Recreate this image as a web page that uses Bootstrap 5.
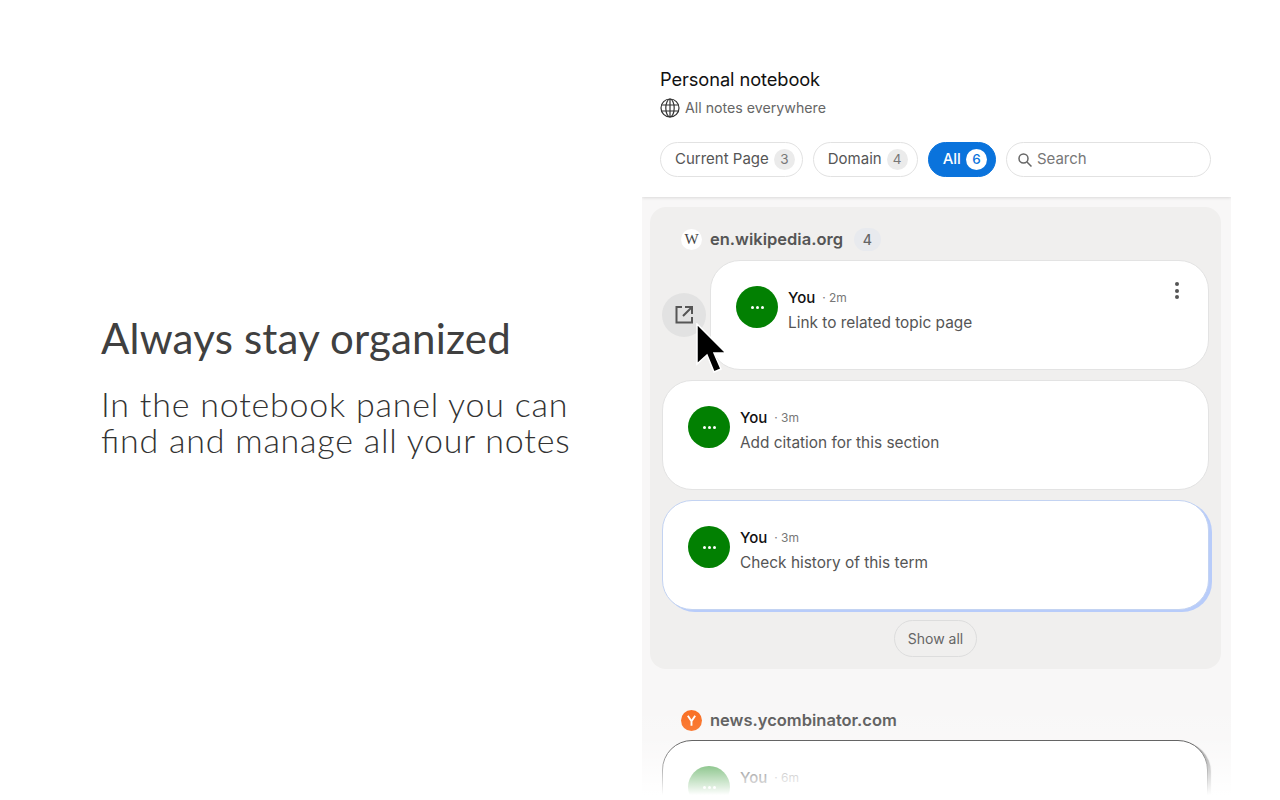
<!DOCTYPE html>
<html lang="en">
<head>
<meta charset="utf-8">
<title>Personal notebook</title>
<link href="https://cdn.jsdelivr.net/npm/bootstrap@5.3.0/dist/css/bootstrap.min.css" rel="stylesheet">
<style>
html,body{height:800px;overflow:hidden;background:#fff}
body{font-family:Inter,"Liberation Sans",sans-serif;color:#111}
.stage{height:800px}
.pitch{width:642px;padding-left:101px;padding-top:313px;font-family:Lato,"Noto Sans",sans-serif;color:#333}
.pitch h1{font-size:42px;line-height:50px;font-weight:400;letter-spacing:.2px;margin:0 0 23px;color:#404040;font-feature-settings:"liga" 1}
.pitch p{font-size:34px;line-height:36px;font-weight:300;letter-spacing:.77px;margin:0;color:#333;font-feature-settings:"liga" 1}
.panel{width:589px;margin-top:42px;height:755px;background:#f8f7f7;position:relative;overflow:hidden}
.panel-top{height:155px;background:#fff;padding:25px 18px 0;box-shadow:0 1px 3px rgba(0,0,0,.12);position:relative}
.panel-title{font-size:18.3px;line-height:24px;font-weight:400;color:#111;letter-spacing:-.1px}
.panel-sub{font-size:14.2px;line-height:20px;color:#666;margin-top:7px;gap:5px}
.chips{margin-top:24px;gap:10px}
.chip{height:35px;border:1px solid #e2e2e2;border-radius:18px;display:flex;align-items:center;font-size:15px;color:#555;padding:0 7px 0 14px;background:#fff;gap:5px;white-space:nowrap}
.chip:nth-child(2){padding-right:9px}
.chip:nth-child(3){padding-right:8px}
.chip i{font-style:normal;width:21px;height:21px;border-radius:50%;background:#ebebeb;color:#777;font-size:13.5px;display:flex;align-items:center;justify-content:center}
.chip-on{background:#0a73dc;border-color:#0a73dc;color:#fff;font-weight:500}
.chip-on i{background:#fff;color:#0a73dc}
.seek{width:205px;height:35px;border:1px solid #e2e2e2;border-radius:18px;padding:0 10px;font-size:15px;color:#777;gap:4px}
.bunch{margin:10px 10px 0 8px;background:#f0efee;border-radius:16px;height:462px;padding:20px 12px 0}
.site{height:25px;font-size:16.5px;font-weight:600;color:#555;padding-left:19px;gap:8px}
.site-w{width:21px;height:21px;border-radius:50%;background:#fff;font-family:"Liberation Serif",serif;font-size:15px;font-weight:400;color:#444;display:flex;align-items:center;justify-content:center}
.site-n{font-weight:500;font-size:14px;color:#666;background:#e8eaee;width:27px;height:23px;border-radius:12px;margin-left:3px;display:flex;align-items:center;justify-content:center}
.note{height:110px;background:#fff;border:1px solid #e3e3e3;border-radius:30px;padding:25px;gap:10px;position:relative}
.note + .note{margin-top:10px}
.slid{margin-left:48px}
.focused{border-color:#c3d3f2;box-shadow:3px 2px 0 #b8ccfa}
.who{width:42px;height:42px;border-radius:50%;background:#028002;color:#fff;flex:none;display:flex;align-items:center;justify-content:center;gap:2px}
.who b{width:3px;height:3px;border-radius:50%;background:#fff;display:block}
.name{font-size:15px;line-height:20px;font-weight:500;color:#111;margin-top:2px}
.when{font-size:12px;color:#777;font-weight:400;margin-left:3px;position:relative;top:-1px}
.text{font-size:15.4px;line-height:20px;color:#555;margin-top:4px}
.kebab{position:absolute;right:29px;top:21px;display:flex;flex-direction:column;gap:2.5px}
.kebab b{width:4px;height:4px;border-radius:50%;background:#555;display:block}
.ext{position:absolute;left:662px;top:293px;width:44px;height:44px;border-radius:50%;background:#e2e2e2;display:flex;align-items:center;justify-content:center}
.more-wrap{margin-top:10px}
.showall{height:37px;width:83px;border:1px solid #ddd;border-radius:19px;font-size:14px;color:#666;display:flex;align-items:center;justify-content:center}
.bunch2{padding:39px 23px 0 20px}
.bunch2 .site{height:24px}
.last{border-color:#444;box-shadow:3px 2px 1px #888}
.fadeout{position:absolute;left:0;right:0;bottom:0;height:97px;background:linear-gradient(rgba(255,255,255,0),rgba(255,255,255,.15) 40%,#fff 98%);z-index:3}
.cursor{position:absolute;left:696px;top:323px;z-index:5}
</style>
</head>
<body>
<div class="stage d-flex position-relative">
  <div class="pitch flex-shrink-0">
    <h1>Always stay organized</h1>
    <p>In the notebook panel you can<br>find and manage all your notes</p>
  </div>
  <div class="panel flex-shrink-0">
    <div class="panel-top">
      <div class="panel-title">Personal notebook</div>
      <div class="panel-sub d-flex align-items-center">
        <svg width="20" height="20" viewBox="0 0 20 20" fill="none" stroke="#333" stroke-width="1.2"><circle cx="10" cy="10" r="9"/><ellipse cx="10" cy="10" rx="4.2" ry="9"/><path d="M10 1v18M1.2 7h17.6M1.2 13h17.6"/></svg>
        <span>All notes everywhere</span>
      </div>
      <div class="chips d-flex">
        <div class="chip"><span>Current Page</span><i>3</i></div>
        <div class="chip"><span>Domain</span><i>4</i></div>
        <div class="chip chip-on"><span>All</span><i>6</i></div>
        <div class="seek d-flex align-items-center">
          <svg width="16" height="16" viewBox="0 0 16 16" fill="none" stroke="#666" stroke-width="1.5"><circle cx="6.5" cy="6.5" r="4.5"/><path d="M10 10l4.500 4.500"/></svg>
          <span>Search</span>
        </div>
      </div>
    </div>
    <div class="bunch">
      <div class="site d-flex align-items-center"><span class="site-w">W</span><span>en.wikipedia.org</span><span class="site-n">4</span></div>
      <div class="note slid d-flex mt-2">
        <div class="who"><b></b><b></b><b></b></div>
        <div><div class="name">You <span class="when">· 2m</span></div><div class="text">Link to related topic page</div></div>
        <div class="kebab"><b></b><b></b><b></b></div>
      </div>
      <div class="note d-flex">
        <div class="who"><b></b><b></b><b></b></div>
        <div><div class="name">You <span class="when">· 3m</span></div><div class="text">Add citation for this section</div></div>
      </div>
      <div class="note focused d-flex">
        <div class="who"><b></b><b></b><b></b></div>
        <div><div class="name">You <span class="when">· 3m</span></div><div class="text">Check history of this term</div></div>
      </div>
      <div class="more-wrap d-flex justify-content-center"><div class="showall">Show all</div></div>
    </div>
    <div class="bunch2">
      <div class="site d-flex align-items-center"><svg width="21" height="21" viewBox="0 0 20 20"><circle cx="10" cy="10" r="10" fill="#f96a1c"/><path d="M6.500 5.500L10 10.800M13.500 5.500L10 10.800V15" fill="none" stroke="#fff" stroke-width="1.800"/></svg><span>news.ycombinator.com</span></div>
      <div class="note last d-flex mt-2">
        <div class="who"><b></b><b></b><b></b></div>
        <div><div class="name">You <span class="when">· 6m</span></div></div>
      </div>
    </div>
    <div class="fadeout"></div>
  </div>
  <div class="ext"><svg width="22" height="22" viewBox="0 0 22 22" fill="none" stroke="#555" stroke-width="2"><path d="M9 3H3.500v15.500H19V13M12 3h7v7M19 3l-9 9"/></svg></div>
  <svg class="cursor" width="34" height="54" viewBox="0 0 34 54"><path d="M1 1V41L11 32L18 49L25 46L18 30H30Z" fill="#000" stroke="#fff" stroke-width="1.500"/></svg>
</div>
</body>
</html>
